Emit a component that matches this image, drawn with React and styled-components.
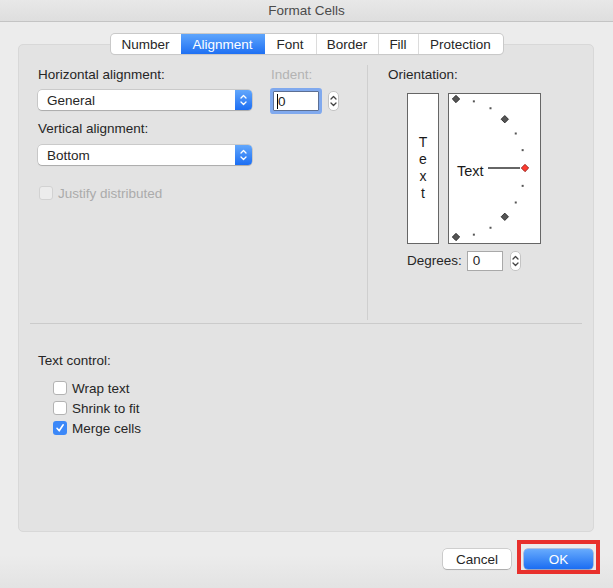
import React from 'react';
import styled, { createGlobalStyle } from 'styled-components';

const Global = createGlobalStyle`
  html, body { margin: 0; padding: 0; }
  body {
    font-family: "Liberation Sans", Arial, sans-serif;
    font-size: 13.5px;
    color: #262626;
    background: #ececec;
  }
`;

const Window = styled.div`
  width: 613px;
  height: 588px;
  display: flex;
  flex-direction: column;
  overflow: hidden;
  background: linear-gradient(#ececec 0, #ececec 555px, #e3e3e3 588px);
`;

const TitleBar = styled.div`
  height: 21px;
  border-bottom: 1px solid #c4c4c4;
  background: linear-gradient(#e8e8e8, #dedede);
  display: flex;
  align-items: center;
  justify-content: center;
  color: #4b4b4b;
  font-size: 13.5px;
`;

const TabBar = styled.div`
  display: flex;
  align-self: center;
  margin-top: 12px;
  margin-bottom: -10px;
  height: 20px;
  background: #fff;
  border-radius: 4px;
  box-shadow: 0 0 0 1px #c9c9c9, 0 1px 1px rgba(0, 0, 0, 0.1);
  position: relative;
  z-index: 2;
  overflow: hidden;
`;

const Tab = styled.div`
  width: ${p => p.w}px;
  display: flex;
  align-items: center;
  justify-content: center;
  color: ${p => (p.active ? '#fff' : '#262626')};
  background: ${p => (p.active ? 'linear-gradient(#5ea5fc, #1f70f3)' : 'transparent')};
  border-left: ${p => (p.first || p.active || p.afterActive ? 'none' : '1px solid #dcdcdc')};
  box-sizing: border-box;
`;

const Panel = styled.div`
  margin: 0 19px 0 18px;
  height: 488px;
  box-sizing: border-box;
  background: #e3e3e3;
  border: 1px solid #d8d8d8;
  border-radius: 5px;
  display: flex;
  flex-direction: column;
`;

const TopSection = styled.div`
  height: 278px;
  display: grid;
  grid-template-columns: 348px 1fr;
`;

const LeftCol = styled.div`
  padding: 22px 0 0 19px;
  display: flex;
  gap: 19px;
`;

const Group = styled.div`
  display: flex;
  flex-direction: column;
`;

const Label = styled.div`
  line-height: 16px;
  color: ${p => (p.disabled ? '#b3b3b3' : '#262626')};
  margin-top: ${p => p.mt || 0}px;
`;

const Select = styled.div`
  width: 214px;
  height: 20px;
  margin-top: ${p => p.mt || 0}px;
  box-sizing: border-box;
  background: #fff;
  border-radius: 4px;
  box-shadow: 0 0 0 0.5px rgba(0, 0, 0, 0.22), 0 1px 1px rgba(0, 0, 0, 0.15);
  display: flex;
  align-items: center;
  padding-left: 9px;
`;

const SelectArrow = styled.span`
  margin-left: auto;
  width: 17px;
  height: 20px;
  background: linear-gradient(#62a7fc, #1c6ef3);
  border-radius: 0 4px 4px 0;
  display: flex;
  align-items: center;
  justify-content: center;
`;

const CheckRow = styled.div`
  display: flex;
  align-items: center;
  gap: 5px;
  height: 16px;
  margin-top: ${p => p.mt || 0}px;
  margin-left: ${p => p.ml || 0}px;
  color: ${p => (p.disabled ? '#ababab' : '#262626')};
`;

const Box = styled.span`
  width: 14px;
  height: 14px;
  box-sizing: border-box;
  border-radius: 3px;
  display: flex;
  align-items: center;
  justify-content: center;
  background: ${p => (p.checked ? '#3c88f8' : p.disabled ? '#ececec' : '#fff')};
  border: ${p => (p.checked ? 'none' : p.disabled ? '1px solid #d2d2d2' : '1px solid #b3b3b3')};
`;

const InputRow = styled.div`
  display: flex;
  align-items: center;
  margin-top: ${p => p.mt || 0}px;
`;

const Field = styled.div`
  width: ${p => p.w}px;
  height: ${p => p.h || 20}px;
  box-sizing: border-box;
  background: #fff;
  border: 1px solid ${p => (p.focus ? '#5c6f93' : '#a9a9a9')};
  box-shadow: ${p => (p.focus ? '0 0 0 3px #80a9ee' : 'none')};
  border-radius: ${p => (p.focus ? '1px' : '0')};
  display: flex;
  align-items: center;
  padding-left: ${p => p.pl || 4}px;
  margin-left: ${p => p.ml || 0}px;
`;

const Caret = styled.span`
  width: 1px;
  height: 15px;
  background: #000;
`;

const Stepper = styled.div`
  width: 11px;
  height: 20px;
  box-sizing: border-box;
  background: #fff;
  border: 1px solid #c4c4c4;
  border-radius: 5px;
  margin-left: ${p => p.ml || 0}px;
  display: flex;
  align-items: center;
  justify-content: center;
`;

const RightCol = styled.div`
  margin: 20px 0 3px 0;
  border-left: 1px solid #cfcfcf;
  padding: 2px 0 0 20px;
  display: flex;
  flex-direction: column;
`;

const OrientRow = styled.div`
  display: flex;
  gap: 9px;
  margin: 10px 0 0 19px;
`;

const VertBox = styled.div`
  width: 32px;
  height: 151px;
  box-sizing: border-box;
  background: #fff;
  border: 1px solid #666;
  display: flex;
  flex-direction: column;
  align-items: center;
  justify-content: center;
  font-size: 14px;
  line-height: 17px;
  color: #1a1a1a;
  padding-bottom: 1px;
`;

const ArcBox = styled.div`
  width: 93px;
  height: 151px;
  box-sizing: border-box;
  background: #fff;
  border: 1px solid #666;
  svg { display: block; }
`;

const DegreesRow = styled.div`
  display: flex;
  align-items: center;
  margin: 6px 0 0 19px;
  height: 21px;
`;

const Divider = styled.div`
  height: 1px;
  background: #cbcbcb;
  margin: 0 11px;
`;

const BottomSection = styled.div`
  padding: 29px 0 0 19px;
  display: flex;
  flex-direction: column;
`;

const Checks = styled.div`
  display: flex;
  flex-direction: column;
  gap: 4px;
  margin-top: 11px;
`;

const Footer = styled.div`
  display: flex;
  justify-content: flex-end;
  align-items: center;
  gap: 13px;
  padding-right: 20px;
  margin-top: 17px;
`;

const Button = styled.button`
  position: relative;
  font-family: "Liberation Sans", Arial, sans-serif;
  font-size: 13.5px;
  width: ${p => p.w}px;
  height: 20px;
  border-radius: 4px;
  border: none;
  padding: 0;
  color: ${p => (p.primary ? '#fff' : '#262626')};
  background: ${p => (p.primary ? 'linear-gradient(#67abfd, #1b6df2)' : '#fff')};
  box-shadow: ${p =>
    p.primary
      ? '0 0 0 0.5px rgba(0,60,180,0.5), 0 1px 1px rgba(0,0,0,0.15)'
      : '0 0 0 0.5px rgba(0,0,0,0.25), 0 1px 1px rgba(0,0,0,0.15)'};
`;

/* red annotation frame drawn over the OK button */
const Marker = styled.span`
  position: absolute;
  left: -7px;
  right: -7px;
  top: -9px;
  bottom: -5px;
  border: 4px solid #e8302c;
  pointer-events: none;
`;

const Chevrons = ({ color = '#fff', h = 12 }) => (
  <svg width="7" height={h} viewBox={`0 0 7 ${h}`}>
    <path d={`M1 ${h / 2 - 2} L3.5 ${h / 2 - 4.5} L6 ${h / 2 - 2}`} fill="none" stroke={color} strokeWidth="1.3" strokeLinecap="round" strokeLinejoin="round" />
    <path d={`M1 ${h / 2 + 2} L3.5 ${h / 2 + 4.5} L6 ${h / 2 + 2}`} fill="none" stroke={color} strokeWidth="1.3" strokeLinecap="round" strokeLinejoin="round" />
  </svg>
);

const Check = () => (
  <svg width="10" height="10" viewBox="0 0 10 10">
    <path d="M2 5.3 L4.2 7.8 L8.2 1.8" fill="none" stroke="#fff" strokeWidth="1.6" strokeLinecap="round" strokeLinejoin="round" />
  </svg>
);

const Arc = () => {
  const cx = 7;
  const cy = 74;
  const r = 69;
  const marks = [];
  for (let a = -90; a <= 90; a += 15) {
    const rad = (a * Math.PI) / 180;
    const x = cx + r * Math.cos(rad);
    const y = cy - r * Math.sin(rad);
    if (a % 45 === 0) {
      const red = a === 0;
      marks.push(
        <rect
          key={a}
          x={x - 2.6}
          y={y - 2.6}
          width="5.2"
          height="5.2"
          transform={`rotate(45 ${x} ${y})`}
          fill={red ? '#ff3b30' : '#555'}
          stroke={red ? '#8a1d18' : '#222'}
          strokeWidth="0.8"
        />
      );
    } else {
      marks.push(<rect key={a} x={x - 1} y={y - 1} width="2" height="2" fill="#555" />);
    }
  }
  return (
    <svg width="91" height="149" viewBox="0 0 91 149">
      <line x1="39" y1="74" x2="71" y2="74" stroke="#000" strokeWidth="1.2" />
      <text x="8" y="82" fontSize="14.5" fontFamily="Liberation Sans, Arial, sans-serif" fill="#1a1a1a">Text</text>
      {marks}
    </svg>
  );
};

const tabs = [
  ['Number', 70],
  ['Alignment', 84],
  ['Font', 51],
  ['Border', 62],
  ['Fill', 40],
  ['Protection', 85],
];

export default function App() {
  return (
    <Window>
      <Global />
      <TitleBar>Format Cells</TitleBar>
      <TabBar>
        {tabs.map(([name, w], i) => (
          <Tab key={name} w={w} first={i === 0} active={name === 'Alignment'} afterActive={i === 2}>
            {name}
          </Tab>
        ))}
      </TabBar>
      <Panel>
        <TopSection>
          <LeftCol>
            <Group>
              <Label>Horizontal alignment:</Label>
              <Select mt={7}>
                General
                <SelectArrow><Chevrons /></SelectArrow>
              </Select>
              <Label mt={11}>Vertical alignment:</Label>
              <Select mt={8}>
                Bottom
                <SelectArrow><Chevrons /></SelectArrow>
              </Select>
              <CheckRow disabled mt={20} ml={1}>
                <Box disabled />
                Justify distributed
              </CheckRow>
            </Group>
            <Group>
              <Label disabled>Indent:</Label>
              <InputRow mt={8}>
                <Field focus w={46} ml={2} pl={3}>
                  <Caret />0
                </Field>
                <Stepper ml={9}><Chevrons color="#444" h={14} /></Stepper>
              </InputRow>
            </Group>
          </LeftCol>
          <RightCol>
            <Label>Orientation:</Label>
            <OrientRow>
              <VertBox>
                <span>T</span>
                <span>e</span>
                <span>x</span>
                <span>t</span>
              </VertBox>
              <ArcBox><Arc /></ArcBox>
            </OrientRow>
            <DegreesRow>
              Degrees:
              <Field w={36} ml={5} pl={5}>0</Field>
              <Stepper ml={7}><Chevrons color="#444" h={14} /></Stepper>
            </DegreesRow>
          </RightCol>
        </TopSection>
        <Divider />
        <BottomSection>
          <Label>Text control:</Label>
          <Checks>
            <CheckRow ml={15}><Box />Wrap text</CheckRow>
            <CheckRow ml={15}><Box />Shrink to fit</CheckRow>
            <CheckRow ml={15}><Box checked><Check /></Box>Merge cells</CheckRow>
          </Checks>
        </BottomSection>
      </Panel>
      <Footer>
        <Button w={68}>Cancel</Button>
        <Button primary w={69}>
          OK
          <Marker />
        </Button>
      </Footer>
    </Window>
  );
}
